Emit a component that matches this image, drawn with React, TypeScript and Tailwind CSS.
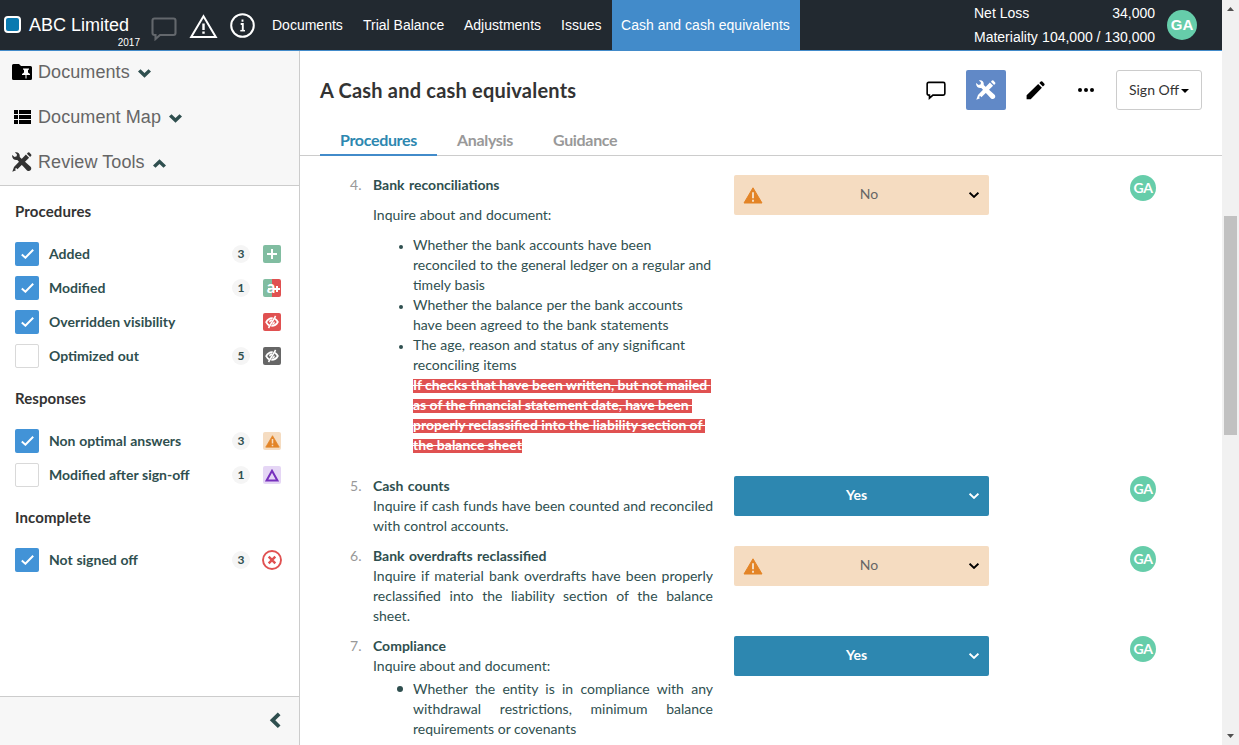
import type { ReactNode } from "react";

function Chevron({ className }: { className: string }) {
  return (
    <svg className={className} viewBox="0 0 13 9" fill="currentColor">
      <path d="M0 2.6 2.5.2 6.5 4 10.5.2 13 2.6 6.5 8.8Z" />
    </svg>
  );
}

function ThinChevron({ className }: { className: string }) {
  return (
    <svg className={className} viewBox="0 0 10 6" fill="none" stroke="currentColor" strokeWidth="1.9">
      <path d="M.6.7 5 4.9 9.4.7" />
    </svg>
  );
}

function ToolsIcon({ className }: { className: string }) {
  return (
    <svg className={className} viewBox="0 0 20 20" fill="currentColor">
      <path d="M.2 3 2.600 5 4.700 4.200 4.900 2.200 2.900.4C5.700-.5 8.300 1.600 7.700 5L18.600 14.800C20.600 17.300 17.600 20.400 15 18.400L5.300 7.900C2.300 8.500-.5 6.100.2 3Z" />
      <path d="M13.900 2.600 17.100 5.800 5.400 17.300 4.200 16 3 17.100 4 18.200.3 19.700 2 15Z" />
      <path d="M14.900 1.700 16 .6Q16.700 0 17.400.6L19.200 2.400Q19.700 3 19.200 3.700L18.100 4.900Z" />
    </svg>
  );
}

function CommentIcon({ className }: { className: string }) {
  return (
    <svg className={className} viewBox="0 0 26 24" fill="none" stroke="currentColor" strokeWidth="2.100">
      <path d="M3.500 1.500H22.500Q24.500 1.500 24.500 3.500V16Q24.500 18 22.500 18H9L4.500 22V18H3.500Q1.500 18 1.500 16V3.500Q1.500 1.500 3.500 1.500Z" />
    </svg>
  );
}

function WarningTriangle({ className }: { className: string }) {
  return (
    <svg className={className} viewBox="0 0 20 17">
      <path d="M10 .8 19 16H1Z" fill="#e38427" stroke="#e38427" strokeWidth="1" strokeLinejoin="round" />
      <path d="M10 5.300V11.300M10 12.700V14.700" stroke="#f5dcc1" strokeWidth="2" />
    </svg>
  );
}

function EyeSlash() {
  return (
    <svg className="h-[14px] w-[14px]" viewBox="0 0 14 14" fill="none" stroke="#fff">
      <path d="M7.700 3.200Q3.400 2.900 1.200 7.200Q2.300 9.300 4.300 10.400M6.300 10.900Q10.600 11.100 12.800 7Q11.800 4.900 9.800 3.800" strokeWidth="1.800" />
      <path d="M7 4.900Q4.900 5 4.800 7.200M9.200 6.800Q9.200 8.900 7.300 9.200" strokeWidth="1.500" />
      <path d="M10.600 1 3.500 13" strokeWidth="1.500" />
    </svg>
  );
}

function Avatar({ large = false }: { large?: boolean }) {
  return large ? (
    <span className="flex h-[30px] w-[30px] items-center justify-center rounded-full bg-[#66cdaa] font-['Liberation_Sans',sans-serif] text-[15px] font-bold text-white">GA</span>
  ) : (
    <span className="flex h-[26px] w-[26px] items-center justify-center rounded-full bg-[#66cdaa] text-[14px] font-bold tracking-[-0.3px] text-white">GA</span>
  );
}

const badge = "flex h-[18px] w-[18px] items-center justify-center rounded-[2px]";

function FilterRow({ label, count, checked, icon }: { label: string; count?: number; checked?: boolean; icon: ReactNode }) {
  return (
    <div className="flex h-[34px] items-center">
      {checked ? (
        <span className="flex h-6 w-6 items-center justify-center rounded-[2px] bg-[#4293d7]">
          <svg className="h-[10px] w-[13px]" viewBox="0 0 13 10" fill="none" stroke="#fff" strokeWidth="2">
            <path d="M.8 5.500 4.400 8.700 12.200.8" />
          </svg>
        </span>
      ) : (
        <span className="h-6 w-6 rounded-[2px] border border-[#d9d9d9] bg-white" />
      )}
      <span className="ml-[10px] flex-1 pb-[2px] text-[14px] font-bold text-[#2f4f4f] [word-spacing:0.3px]">{label}</span>
      {count !== undefined && (
        <span className="flex h-[18px] w-[18px] items-center justify-center rounded-full bg-[#f5f5f5] text-[12px] font-bold text-[#2f4f4f]">{count}</span>
      )}
      <span className="ml-3 flex w-5 justify-center">{icon}</span>
    </div>
  );
}

function SectionLink({ icon, label, up }: { icon: ReactNode; label: string; up?: boolean }) {
  return (
    <div className="flex h-[45px] items-center">
      <span className="flex w-[20px] justify-center">{icon}</span>
      <span className="ml-[6px] text-[18px] tracking-[0.08px] text-[#666]">{label}</span>
      <Chevron className={up ? "ml-2 mt-[1px] h-[9px] w-[13px] rotate-180 text-[#2f4f4f]" : "ml-2 mt-[1px] h-[9px] w-[13px] text-[#2f4f4f]"} />
    </div>
  );
}

function Answer({ value }: { value: "Yes" | "No" }) {
  return value === "Yes" ? (
    <div className="flex h-10 w-[255px] items-center rounded-[2px] bg-[#2d87b0] pr-[10px] text-white">
      <span className="flex-1 pb-[2px] pl-[10px] text-center text-[14px] font-bold">Yes</span>
      <ThinChevron className="h-[6px] w-[10px]" />
    </div>
  ) : (
    <div className="flex h-10 w-[255px] items-center rounded-[2px] bg-[#f5dcc1] pr-[10px] pl-[9px]">
      <WarningTriangle className="h-[17px] w-5" />
      <span className="flex-1 pb-[2px] pl-[6px] text-center text-[14px] text-[#666]">No</span>
      <ThinChevron className="h-[6px] w-[10px] text-black" />
    </div>
  );
}

function Procedure({ n, title, answer, className, children }: { n: number; title: string; answer: "Yes" | "No"; className: string; children: ReactNode }) {
  return (
    <section className={className}>
      <span className="w-[23px] shrink-0 text-[#999]">{n}.</span>
      <div className="mr-px w-[340px] shrink-0">
        <h3 className="font-bold [word-spacing:1px]">{title}</h3>
        {children}
      </div>
      <div className="ml-5 w-[396px] shrink-0">
        <Answer value={answer} />
      </div>
      <Avatar />
    </section>
  );
}

function Bullet({ big, children }: { big?: boolean; children: ReactNode }) {
  return (
    <li className="flex">
      <span className={big ? "mt-[7px] mr-[10px] -ml-4 h-[6px] w-[6px] shrink-0 rounded-full bg-[#2f4f4f]" : "mt-[10px] mr-[10px] -ml-[14px] h-1 w-1 shrink-0 rounded-full bg-[#2f4f4f]"} />
      <span className="flex-1">{children}</span>
    </li>
  );
}

export default function App() {
  return (
    <div className="flex h-[745px] w-[1239px] overflow-hidden bg-white font-[Lato,sans-serif] text-[14px] text-[#2f4f4f]">
      <div className="flex w-[1222px] flex-col">
        <header className="flex h-[51px] shrink-0 border-b border-[#428bca] bg-[#222930] font-['Liberation_Sans',sans-serif] text-white">
          <div className="flex w-[263px] pl-1">
            <span className="mt-4 h-[17px] w-[17px] rounded-[4px] border-2 border-white bg-[#0a7ab0]" />
            <div className="ml-2 w-[111px] pt-[14px]">
              <div className="text-[18px] leading-[22px] whitespace-nowrap">ABC Limited</div>
              <div className="pt-px text-right text-[10px] leading-[12px]">2017</div>
            </div>
            <CommentIcon className="mt-[17px] ml-[11px] h-6 w-[26px] text-[#63676c]" />
            <svg className="mt-[14px] ml-3 h-[25px] w-[29px]" viewBox="0 0 29 25" fill="none" stroke="#fff" strokeWidth="2">
              <path d="M14.500 2.300 26.800 23H2.200Z" />
              <path d="M14.500 9.500V16M14.500 17.500V19.700" strokeWidth="2.400" />
            </svg>
            <svg className="mt-[13px] ml-[12px] h-[25px] w-[25px]" viewBox="0 0 25 25" fill="none" stroke="#fff" strokeWidth="2">
              <circle cx="12.500" cy="12.500" r="11.300" />
              <path d="M12.500 6.500V8.700M10.700 11H12.800V17.500" strokeWidth="1.900" />
              <path d="M10.300 17.700H15" strokeWidth="1.500" />
            </svg>
          </div>
          <nav className="flex text-[14px] leading-[50px] whitespace-nowrap">
            <a className="w-[90px] pl-[9px]">Documents</a>
            <a className="w-[101px] pl-[10px]">Trial Balance</a>
            <a className="w-[97px] pl-[10px]">Adjustments</a>
            <a className="w-[61px] pl-[10px]">Issues</a>
            <a className="w-[188px] bg-[#428bca] pl-[9px] tracking-[0.03px]">Cash and cash equivalents</a>
          </nav>
          <div className="ml-auto w-[181px] pt-[1px] text-[14px] leading-6">
            <div className="flex justify-between"><span>Net Loss</span><span>34,000</span></div>
            <div className="flex justify-between"><span>Materiality</span><span>104,000 / 130,000</span></div>
          </div>
          <div className="mr-[25px] ml-3 pt-[10px]"><Avatar large /></div>
        </header>

        <div className="flex min-h-0 flex-1">
          <aside className="flex w-[300px] shrink-0 flex-col border-r border-[#ccc]">
            <div className="h-[135px] border-b border-[#ccc] bg-[#f7f7f7] pl-3 font-['Liberation_Sans',sans-serif]">
              <div className="-mt-[1px]">
                <SectionLink
                  label="Documents"
                  icon={
                    <svg className="mb-px h-4 w-5" viewBox="0 0 20 16">
                      <path d="M0 1.500Q0 0 1.500 0H7L9 2H18.500Q20 2 20 3.500V14.500Q20 16 18.500 16H1.500Q0 16 0 14.500Z" fill="#000" />
                      <path d="M11 4.500H17V5.500L16 6V8.500L18 10V11H14.500V14.500H13.500V11H10V10L12 8.500V6L11 5.500Z" fill="#fff" />
                    </svg>
                  }
                />
                <SectionLink
                  label="Document Map"
                  icon={
                    <svg className="mb-px ml-px h-[14px] w-[17px]" viewBox="0 0 17 14">
                      <path d="M0 0H4V4H0ZM5 0H17V4H5ZM0 5H4V9H0ZM5 5H17V9H5ZM0 10H4V14H0ZM5 10H17V14H5Z" />
                    </svg>
                  }
                />
                <SectionLink up label="Review Tools" icon={<ToolsIcon className="mb-px h-[20px] w-[20px] text-[#333]" />} />
              </div>
            </div>
            <div className="flex-1 pr-[17px] pl-[15px]">
              <h2 className="pt-[15px] pb-[15px] text-[15px] leading-[21px] font-bold tracking-[0.1px] text-[#333]">Procedures</h2>
              <FilterRow checked label="Added" count={3} icon={<span className={`${badge} bg-[#81bda1]`}><svg className="h-[10px] w-[10px]" viewBox="0 0 10 10"><path d="M5 0V10M0 5H10" stroke="#fff" strokeWidth="2" /></svg></span>} />
              <FilterRow checked label="Modified" count={1} icon={
                <span className={`${badge} bg-[linear-gradient(90deg,#81bda1_50%,#e05151_50%)]`}>
                  <span className="relative -mt-[3px] -ml-[2px] text-[17px] leading-[16px] font-bold text-white">
                    a
                    <span className="absolute top-[9px] left-[1px] h-px w-[12px] bg-white" />
                    <span className="absolute top-[9px] left-[7px] h-[2px] w-[6px] bg-white" />
                    <span className="absolute top-[7px] left-[9px] h-[6px] w-[2px] bg-white" />
                  </span>
                </span>
              } />
              <FilterRow checked label="Overridden visibility" icon={<span className={`${badge} bg-[#e05151]`}><EyeSlash /></span>} />
              <FilterRow label="Optimized out" count={5} icon={<span className={`${badge} bg-[#666]`}><EyeSlash /></span>} />
              <h2 className="pt-[15px] pb-[15px] text-[15px] leading-[21px] font-bold tracking-[0.05px] text-[#333]">Responses</h2>
              <FilterRow checked label="Non optimal answers" count={3} icon={<span className={`${badge} bg-[#f5dcc1]`}><WarningTriangle className="h-[13px] w-[15px]" /></span>} />
              <FilterRow label="Modified after sign-off" count={1} icon={<span className={`${badge} bg-[#e5d6f5]`}><svg className="h-[13px] w-[14px]" viewBox="0 0 14 13"><path d="M7 1.800 12.400 11.500H1.600Z" fill="none" stroke="#7730bd" strokeWidth="2" /></svg></span>} />
              <h2 className="pt-[15px] pb-[15px] text-[15px] leading-[21px] font-bold tracking-[0.1px] text-[#333]">Incomplete</h2>
              <FilterRow checked label="Not signed off" count={3} icon={<svg className="h-5 w-5" viewBox="0 0 20 20" fill="none" stroke="#e05151"><circle cx="10" cy="10" r="9" strokeWidth="1.900" /><path d="M6.700 6.700 13.300 13.300M13.300 6.700 6.700 13.300" strokeWidth="2.400" /></svg>} />
            </div>
            <div className="flex h-[49px] justify-end border-t border-[#ccc] bg-[#f7f7f7] pt-[15px] pr-[18px]">
              <svg className="h-[17px] w-3" viewBox="0 0 12 17" fill="#2f4f4f"><path d="M8.800.5 11.500 3.200 6.300 8.300 11.500 13.400 8.800 16.100.8 8.300Z" /></svg>
            </div>
          </aside>

          <main className="flex min-w-0 flex-1 flex-col">
            <div className="flex h-[75px] shrink-0 items-center pt-[3px] pr-5 pl-5">
              <h1 className="flex-1 pb-px text-[20px] font-bold tracking-[0.21px] text-[#333]">A Cash and cash equivalents</h1>
              <CommentIcon className="mr-[20px] h-[19px] w-5 text-black" />
              <span className="mr-5 flex h-10 w-10 items-center justify-center rounded-[2px] bg-[#6189c7] text-white"><ToolsIcon className="h-5 w-5" /></span>
              <svg className="mr-[33px] h-[19px] w-[19px]" viewBox="0 0 19 19"><path d="M12.200 3 15.900 6.700 4.700 18.200H.6V14.300ZM13.300 2 14.800.6Q15.600 0 16.300.6L18.400 2.700Q19 3.400 18.300 4.200L16.900 5.600Z" /></svg>
              <svg className="mr-[22px] h-1 w-4" viewBox="0 0 16 4"><circle cx="2" cy="2" r="2" /><circle cx="8" cy="2" r="2" /><circle cx="14" cy="2" r="2" /></svg>
              <button className="flex h-10 w-[86px] items-center justify-center rounded-[3px] border border-[#ccc] pb-[2px] text-[14px] text-[#333]">
                Sign Off
                <svg className="mt-[4px] ml-[2px] h-1 w-[8px]" viewBox="0 0 8 4"><path d="M0 0H8L4 4Z" /></svg>
              </button>
            </div>
            <div className="flex h-[30px] shrink-0 border-b border-[#ccc] pl-5 text-[16px] leading-[28px] font-bold tracking-[-0.33px] text-[#999]">
              <span className="h-[30px] w-[117px] border-b-2 border-[#428bca] pl-5 text-[#2d87b0]">Procedures</span>
              <span className="w-[96px] pl-5">Analysis</span>
              <span className="pl-5">Guidance</span>
            </div>
            <div className="flex-1 overflow-hidden pt-[19px] pl-[50px] leading-5">
              <Procedure n={4} title="Bank reconciliations" answer="No" className="flex h-[301px] items-start">
                <p className="mt-[10px] [word-spacing:0.4px]">Inquire about and document:</p>
                <ul className="mt-[10px] pl-10 whitespace-nowrap [word-spacing:0.33px]">
                  <Bullet>Whether the bank accounts have been<br />reconciled to the general ledger on a regular and<br />timely basis</Bullet>
                  <Bullet>Whether the balance per the bank accounts<br />have been agreed to the bank statements</Bullet>
                  <Bullet>The age, reason and status of any significant<br />reconciling items</Bullet>
                  <li><del className="bg-[linear-gradient(transparent_3px,#e05151_3px)] font-bold whitespace-pre text-white [word-spacing:-0.15px]">{"If checks that have been written, but not mailed \nas of the financial statement date, have been \nproperly reclassified into the liability section of \nthe balance sheet"}</del></li>
                </ul>
              </Procedure>
              <Procedure n={5} title="Cash counts" answer="Yes" className="flex h-[70px] items-start">
                <p className="text-justify">Inquire if cash funds have been counted and reconciled with control accounts.</p>
              </Procedure>
              <Procedure n={6} title="Bank overdrafts reclassified" answer="No" className="flex h-[90px] items-start">
                <p className="text-justify">Inquire if material bank overdrafts have been properly reclassified into the liability section of the balance sheet.</p>
              </Procedure>
              <Procedure n={7} title="Compliance" answer="Yes" className="flex items-start">
                <p>Inquire about and document:</p>
                <ul className="mt-[3px] pl-10 text-justify">
                  <Bullet big>Whether the entity is in compliance with any withdrawal restrictions, minimum balance requirements or covenants</Bullet>
                </ul>
              </Procedure>
            </div>
          </main>
        </div>
      </div>
      <div className="flex w-[17px] flex-col items-center bg-[#f1f1f1]">
        <svg className="mt-[7px] h-1 w-[7px]" viewBox="0 0 7 4" fill="#505050"><path d="M0 4H7L3.500 0Z" /></svg>
        <div className="mt-[205px] h-[219px] w-[13px] bg-[#c1c1c1]" />
        <svg className="mt-auto mb-[7px] h-1 w-[7px]" viewBox="0 0 7 4" fill="#505050"><path d="M0 0H7L3.500 4Z" /></svg>
      </div>
    </div>
  );
}
